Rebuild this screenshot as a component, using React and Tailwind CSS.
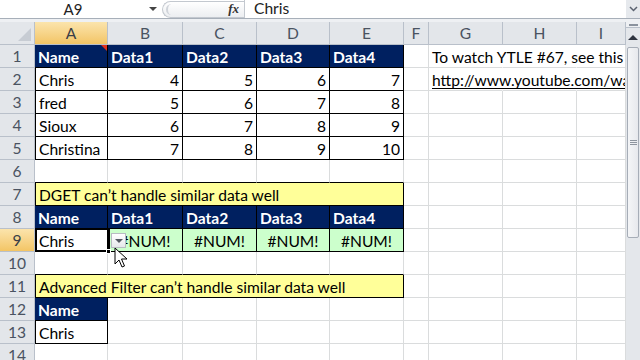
import clsx from 'clsx'

const COLS = [
  { key: 'A', w: 73 },
  { key: 'B', w: 75 },
  { key: 'C', w: 74 },
  { key: 'D', w: 73 },
  { key: 'E', w: 74 },
  { key: 'F', w: 25 },
  { key: 'G', w: 74 },
  { key: 'H', w: 74 },
  { key: 'I', w: 49 },
]

const ROWS = Array.from({ length: 14 }, (_, i) => i + 1)

// cell contents, keyed like the sheet
const CELLS = {
  A1: { v: 'Name', fill: 'navy' },
  B1: { v: 'Data1', fill: 'navy' },
  C1: { v: 'Data2', fill: 'navy' },
  D1: { v: 'Data3', fill: 'navy' },
  E1: { v: 'Data4', fill: 'navy' },
  G1: { v: 'To watch YTLE #67, see this video:', spill: true },
  G2: { v: 'http://www.youtube.com/watch?v=ytle67', spill: true, link: true },
  A2: { v: 'Chris', box: true },
  A3: { v: 'fred', box: true },
  A4: { v: 'Sioux', box: true },
  A5: { v: 'Christina', box: true },
  A7: { v: 'DGET can\u2019t handle similar data well', fill: 'yellow', box: true, span: 5 },
  A8: { v: 'Name', fill: 'navy' },
  B8: { v: 'Data1', fill: 'navy' },
  C8: { v: 'Data2', fill: 'navy' },
  D8: { v: 'Data3', fill: 'navy' },
  E8: { v: 'Data4', fill: 'navy' },
  A9: { v: 'Chris', box: true, active: true },
  A11: { v: 'Advanced Filter can\u2019t handle similar data well', fill: 'yellow', box: true, span: 5 },
  A12: { v: 'Name', fill: 'navy' },
  A13: { v: 'Chris', box: true },
}

const numbers = [
  [4, 5, 6, 7],
  [5, 6, 7, 8],
  [6, 7, 8, 9],
  [7, 8, 9, 10],
]
numbers.forEach((row, r) => {
  row.forEach((n, c) => {
    CELLS[`${'BCDE'[c]}${r + 2}`] = { v: String(n), box: true, num: true }
  })
})
;['B', 'C', 'D', 'E'].forEach((k) => {
  CELLS[`${k}7`] = { hidden: true, box: true }
  CELLS[`${k}11`] = { hidden: true, box: true }
  CELLS[`${k}9`] = { v: '#NUM!', fill: 'green', box: true, center: true }
})

const isBoxed = (key) => {
  const c = CELLS[key]
  return !!c && (c.box || c.fill === 'navy')
}

function Cell({ colIdx, row }) {
  const col = COLS[colIdx]
  const key = `${col.key}${row}`
  const cell = CELLS[key] || {}
  if (cell.hidden) return null

  const span = cell.span || 1
  const width = COLS.slice(colIdx, colIdx + span).reduce((sum, c) => sum + c.w, 0)
  const nextCol = COLS[colIdx + span]
  const rightKey = nextCol ? `${nextCol.key}${row}` : null
  const belowKey = `${col.key}${row + 1}`

  let right = 'grid'
  if (isBoxed(key) || (rightKey && isBoxed(rightKey))) right = 'black'
  if ((row === 1 || row === 2) && (col.key === 'G' || col.key === 'H')) right = 'none'

  const bottom = isBoxed(key) || isBoxed(belowKey) ? 'black' : 'grid'

  return (
    <div
      className={clsx(
        'relative box-border flex h-[23px] shrink-0 items-center whitespace-nowrap border-b border-r px-[3px] pt-[4px] text-[15.6px] leading-none',
        right === 'black' && 'border-r-black',
        right === 'none' && 'border-r-transparent',
        right === 'grid' && 'border-r-[#dadcdd]',
        bottom === 'black' ? 'border-b-black' : 'border-b-[#dadcdd]',
        col.key === 'A' && cell.box && 'border-l border-l-black',
        cell.fill === 'navy' && 'bg-[#002060] font-bold text-white',
        cell.fill === 'yellow' && 'bg-[#ffff99] text-black',
        cell.fill === 'green' && 'bg-[#ccffcc] text-black',
        !cell.fill && 'text-black',
        cell.num && 'justify-end',
        cell.center && 'justify-center',
        cell.active && 'z-10',
        cell.link && 'text-[#1f1fa3] underline underline-offset-2'
      )}
      style={{ width }}
    >
      {cell.v}
      {key === 'A1' && (
        <span className="absolute right-0 top-0 h-0 w-0 border-l-[6px] border-t-[6px] border-l-transparent border-t-[#e0301e]" />
      )}
      {cell.active && (
        <>
          <span className="pointer-events-none absolute -left-[1px] -top-[1px] h-[24px] w-[75px] border-2 border-black" />
          <span className="absolute -bottom-[3px] left-[70px] h-[5px] w-[5px] border border-white bg-black" />
          <span className="absolute left-[75px] top-[4px] flex h-[15px] w-[15px] items-center justify-center border border-[#b8bcc2] bg-gradient-to-b from-white to-[#e6e8eb]">
            <span className="h-0 w-0 border-x-[4px] border-t-[4px] border-x-transparent border-t-[#555b63]" />
          </span>
        </>
      )}
    </div>
  )
}

function FormulaBar() {
  return (
    <div className="flex h-[19px] items-stretch border-b border-[#a7afb9] bg-white text-[15px] text-[#222]">
      <div className="flex w-[146px] items-center justify-center">A9</div>
      <div className="flex w-[14px] items-center justify-center">
        <span className="h-0 w-0 border-x-[4px] border-t-[4px] border-x-transparent border-t-[#444]" />
      </div>
      <div className="flex items-center pl-[2px]">
        <div className="relative flex h-[17px] w-[82px] items-center justify-end rounded-l-full border border-r-0 border-[#c3c8cf] bg-gradient-to-b from-white to-[#eceef1] pr-[5px]">
          <span className="absolute left-[3px] top-[2px] h-[11px] w-[8px] rounded-l-full border-l-2 border-[#d0d4da]" />
          <span className="font-['Liberation_Serif',serif] text-[13px] font-bold italic text-[#333]">fx</span>
        </div>
      </div>
      <div className="flex flex-1 items-center border-l border-[#c3c8cf] pl-[9px] text-[15.6px]">Chris</div>
      <div className="flex w-[14px] items-center justify-center bg-[#e6e9ed]">
        <svg width="9" height="6" viewBox="0 0 9 6">
          <path d="M1 1l3.5 3.5L8 1" fill="none" stroke="#5a6270" strokeWidth="1.5" />
        </svg>
      </div>
    </div>
  )
}

function ColumnHeaders() {
  return (
    <div className="flex h-[23px]">
      <div className="relative box-border w-[35px] shrink-0 border-b border-r border-[#b9c0ca] bg-[#e3e6ea]">
        <span className="absolute bottom-[3px] right-[3px] h-0 w-0 border-b-[13px] border-l-[13px] border-b-[#c7ccd3] border-l-transparent" />
      </div>
      {COLS.map((col) => (
        <div
          key={col.key}
          className={clsx(
            'box-border flex shrink-0 items-center justify-center border-b border-r border-[#b9c0ca] pt-[2px] text-[15.6px]',
            col.key === 'A'
              ? 'bg-gradient-to-b from-[#fbe4ac] to-[#f3c564] text-[#3a3f47]'
              : 'bg-[#e3e6ea] text-[#4a5361]'
          )}
          style={{ width: col.w }}
        >
          {col.key}
        </div>
      ))}
    </div>
  )
}

function Scrollbar() {
  return (
    <div className="flex w-[14px] shrink-0 flex-col bg-[#e4e7eb]">
      <div className="flex h-[6px] items-center justify-center border-b border-[#b9c0ca] bg-[#eef0f3]">
        <span className="h-[2px] w-[9px] border-y border-[#8b939e]" />
      </div>
      <div className="flex h-[18px] items-center justify-center">
        <span className="h-0 w-0 border-x-[5px] border-b-[5px] border-x-transparent border-b-[#2e3440]" />
      </div>
      <div className="mx-[1px] mt-[1px] flex h-[191px] items-center justify-center rounded-[2px] border border-[#a6adb7] bg-gradient-to-r from-[#f4f5f7] to-[#e7e9ed]">
        <span className="flex flex-col gap-[1px]">
          <span className="h-[1px] w-[7px] bg-[#8d949e]" />
          <span className="h-[1px] w-[7px] bg-[#8d949e]" />
          <span className="h-[1px] w-[7px] bg-[#8d949e]" />
        </span>
      </div>
    </div>
  )
}

export default function App() {
  return (
    <div className="relative h-[360px] w-[640px] overflow-hidden bg-white font-['Lato','Liberation_Sans',sans-serif]">
      <FormulaBar />
      <div className="h-[3px] bg-[#eef0f3]" />
      <div className="flex">
        <div className="w-[626px] shrink-0 overflow-hidden">
          <ColumnHeaders />
          {ROWS.map((row) => (
            <div key={row} className="flex h-[23px]">
              <div
                className={clsx(
                  'box-border flex w-[35px] shrink-0 items-center justify-center border-b border-r border-[#b9c0ca] pt-[2px] text-[15.6px]',
                  row === 9
                    ? 'bg-gradient-to-b from-[#fbe4ac] to-[#f3c564] text-[#3a3f47]'
                    : 'bg-[#e3e6ea] text-[#4a5361]'
                )}
              >
                {row}
              </div>
              {COLS.map((col, i) => (
                <Cell key={col.key} colIdx={i} row={row} />
              ))}
            </div>
          ))}
        </div>
        <Scrollbar />
      </div>
      <svg className="absolute left-[114px] top-[247px]" width="13" height="21" viewBox="0 0 13 21">
        <path
          d="M1 1v16l4-4 3 7 2.5-1-3-7h5.5z"
          fill="#fff"
          stroke="#000"
          strokeWidth="1"
          strokeLinejoin="round"
        />
      </svg>
    </div>
  )
}
